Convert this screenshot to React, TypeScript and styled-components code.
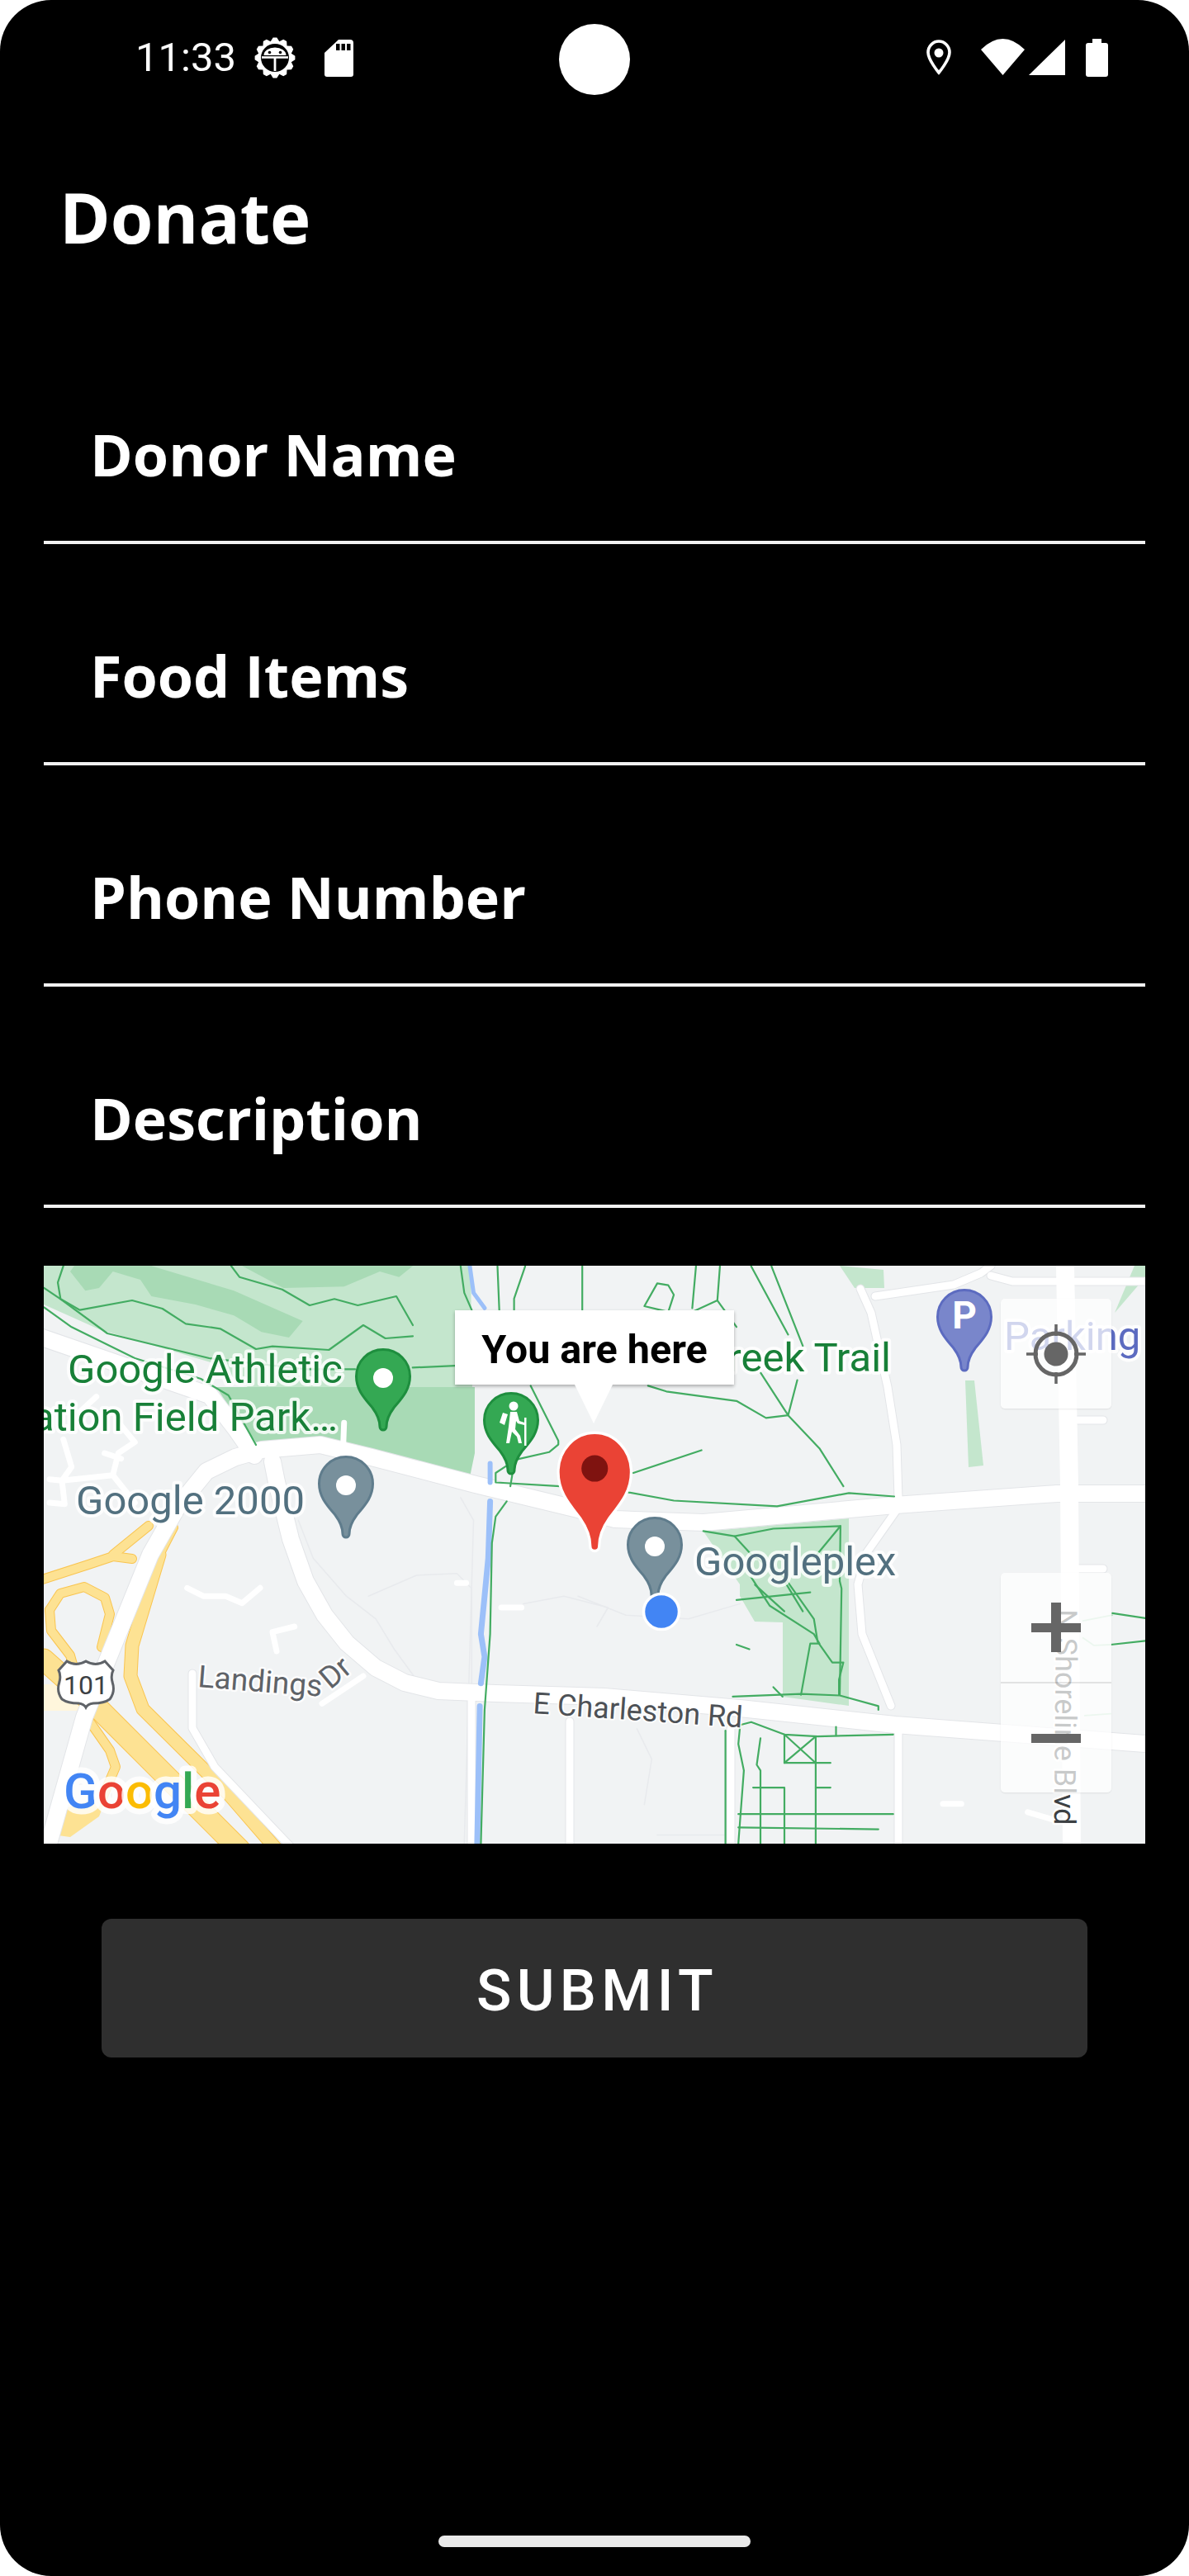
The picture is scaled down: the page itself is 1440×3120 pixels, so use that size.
import React from "react";
import styled, { createGlobalStyle } from "styled-components";

const Global = createGlobalStyle`
  html, body { margin: 0; padding: 0; background: #fff; }
  #root { width: 1440px; height: 3120px; }
`;

const Phone = styled.div`
  position: relative;
  width: 1440px;
  height: 3120px;
  background: #000;
  border-radius: 62px;
  display: flex;
  flex-direction: column;
  overflow: hidden;
  color: #fff;
`;

const StatusBar = styled.header`
  height: 140px;
  flex: none;
  display: grid;
  grid-template-columns: 1fr 86px 1fr;
  align-items: start;
  padding-top: 29px;
  box-sizing: border-box;
`;
const StatusLeft = styled.div`
  display: flex;
  align-items: center;
  height: 86px;
  padding-left: 164px;
  margin-top: -2px;
`;
const Clock = styled.span`
  font: 400 49px/56px Roboto, sans-serif;
  color: #fff;
  width: 144px;
`;
const Camera = styled.div`
  width: 86px;
  height: 86px;
  border-radius: 50%;
  background: #fff;
`;
const StatusRight = styled.div`
  display: flex;
  justify-content: flex-end;
  padding: 16px 98px 0 0;
  height: 50px;
`;
const StatusIcons = styled.svg`
  display: block;
`;

const Title = styled.h1`
  margin: 68px 0 73px 72px;
  font: 700 83.5px/110px "Open Sans", sans-serif;
  color: #fff;
`;

const Field = styled.div`
  height: 268px;
  box-sizing: border-box;
  margin: 0 53px;
  padding: 111px 0 0 56px;
  border-bottom: 4px solid #f2f2f2;
  font: 700 70px/96px "Open Sans", sans-serif;
  color: #fff;
`;

const MapFrame = styled.div`
  position: relative;
  margin: 70px 53px 0;
  height: 700px;
  overflow: hidden;
  background: #f1f3f4;
`;
const MapSvg = styled.svg`
  display: block;
  width: 1334px;
  height: 700px;
`;

const Tooltip = styled.div`
  position: absolute;
  left: 498px;
  top: 54px;
  width: 338px;
  height: 90px;
  padding-top: 5px;
  box-sizing: border-box;
  background: #fff;
  box-shadow: 0 2px 4px rgba(0, 0, 0, 0.3);
  display: flex;
  align-items: center;
  justify-content: center;
  font: 700 48.5px/54px Roboto, sans-serif;
  color: #000;
  &::after {
    content: "";
    position: absolute;
    left: 145px;
    top: 90px;
    border-left: 23px solid transparent;
    border-right: 23px solid transparent;
    border-top: 47px solid #fff;
  }
`;

const MapControl = styled.div<{ $top: number; $height: number }>`
  position: absolute;
  left: 1159px;
  top: ${(p) => p.$top}px;
  width: 134px;
  height: ${(p) => p.$height}px;
  background: rgba(255, 255, 255, 0.72);
  border-radius: 5px;
  box-shadow: 0 1px 2px rgba(0, 0, 0, 0.08);
  display: flex;
  flex-direction: column;
`;
const ControlCell = styled.div<{ $divider?: boolean }>`
  flex: 1;
  display: flex;
  align-items: center;
  justify-content: center;
  ${(p) => (p.$divider ? "border-bottom: 2px solid rgba(0,0,0,.1);" : "")}
`;
const ControlIcon = styled.svg`
  display: block;
`;

const SubmitButton = styled.button`
  display: block;
  margin: 91px 123px 0;
  height: 168px;
  flex: none;
  border: 0;
  border-radius: 12px;
  padding: 6px 0 0 7px;
  background: #2f2f2f;
  color: #fff;
  font: 500 70px/80px Roboto, sans-serif;
  letter-spacing: 6.3px;
  text-transform: uppercase;
`;

const HomeIndicator = styled.div`
  margin: auto auto 35px;
  width: 378px;
  height: 14px;
  border-radius: 7px;
  background: #e9e9e9;
`;

/* map drawing parts */
const Area = styled.polygon<{ $c: string }>`
  fill: ${(p) => p.$c};
  stroke: none;
`;
const Line = styled.polyline<{ $c: string; $w: number }>`
  fill: none;
  stroke: ${(p) => p.$c};
  stroke-width: ${(p) => p.$w}px;
  stroke-linejoin: round;
  stroke-linecap: round;
`;
const Label = styled.text<{ $c: string; $s: number; $halo?: number; $w?: number }>`
  font-family: Roboto, sans-serif;
  font-size: ${(p) => p.$s}px;
  font-weight: ${(p) => p.$w ?? 400};
  fill: ${(p) => p.$c};
  stroke: rgba(255, 255, 255, 0.82);
  stroke-width: ${(p) => p.$halo ?? 8}px;
  stroke-linejoin: round;
  paint-order: stroke;
`;

type Zone = "a" | "b" | "c" | "d";
const zones: Record<Zone, (x: number, y: number) => [number, number]> = {
  a: (x, y) => [40 + x / 2.24, 1520 + y / 2.178], // left half
  b: (x, y) => [700 + x / 2.24, 1520 + y / 2.178], // right half
  c: (x, y) => [50 + x / 3, 1530 + y / 3], // top-left detail
  d: (x, y) => [50 + x / 3, 1880 + y / 3], // bottom-left detail
};
const P = (z: Zone, s: string) =>
  s
    .trim()
    .split(/\s+/)
    .map((t) => {
      const [x, y] = t.split(",").map(Number);
      const [a, b] = zones[z](x, y);
      return `${a.toFixed(1)},${b.toFixed(1)}`;
    })
    .join(" ");

const roads: string[] = [
  "57,2240 102,2080 182,1883 215,1825 250,1782 285,1765 317,1756 388,1750 450,1765 576,1798 700,1828 745,1840 852,1844 1084,1823 1280,1809 1395,1809",
  "45,1618 254,1690 285,1730 308,1763",
  "330,1770 335,1795 352,1864 370,1915 393,1956 420,1990 455,2020 490,2038 531,2048 600,2051 732,2055 896,2069 1084,2089 1387,2112",
];

const minorRoads: string[] = [
  "1042,1561 1055,1590 1075,1680 1086,1750 1088,1814",
  "1088,1826 1050,1880 1039,1919 1044,1979 1079,2066",
  "1088,2098 1088,2240",
  "885,2094 885,2240",
  "571,2060 571,2240",
  "690,2085 690,2240",
  "233,2027 233,2093 260,2140 355,2240",
  "1060,1570 1155,1556 1188,1542 1200,1533",
  "1200,1545 1226,1552 1280,1552",
  "1302,1552 1387,1552",
  "1302,1720 1336,1720",
  "1302,1900 1336,1900",
];
const tinyRoads: [Zone, string][] = [
  ["c", "200,485 140,540"],
  ["c", "80,640 110,740 75,790 260,770 340,870"],
  ["c", "260,770 280,690 340,650 290,590"],
  ["c", "230,690 290,710"],
  ["c", "30,785 75,790 85,875 30,870"],
  ["c", "1100,580 1097,660"],
  ["d", "530,130 590,160 670,160 730,185 795,130"],
  ["d", "920,270 840,290 855,360"],
  ["d", "1020,550 1170,450"],
  ["a", "1150,865 1175,865"],
  ["a", "1270,930 1325,930"],
  ["b", "990,1448 1040,1448"],
  ["b", "1220,1470 1290,1490"],
];
const faint: [Zone, string][] = [
  ["a", "720,700 760,800 850,900 930,960 980,1040 1040,1120"],
  ["a", "910,900 1040,845 1150,840 1190,880 1190,1180"],
  ["a", "1160,640 1195,700 1170,1553"],
  ["a", "1330,920 1440,900 1560,930 1530,980"],
  ["b", "0,900 130,950 300,960 440,920"],
  ["b", "160,1250 200,1330 180,1450"],
  ["b", "215,1530 400,1530"],
];

const trails: [Zone, string][] = [
  ["c", "80,10 60,70 70,130 140,170 330,135 440,165 525,220 650,238 780,312 840,302 1045,315 1170,225 1250,273 1350,265"],
  ["c", "690,10 720,50 875,95 975,153 1065,130 1150,153 1290,120 1350,225"],
  ["c", "10,160 110,232 340,345 580,420 680,480 780,660"],
  ["c", "10,90 70,130 240,255 610,345 960,385 1140,385"],
  ["a", "1030,297 1145,292"],
  ["a", "1335,30 1305,115 1305,145"],
  ["a", "1260,30 1265,145"],
  ["a", "1490,30 1490,80 1490,145"],
  ["a", "1160,30 1170,100 1190,145"],
  ["a", "1350,345 1425,490 1425,500 1400,520 1310,540 1255,575 1255,600 1430,610"],
  ["a", "1300,580 1295,610"],
  ["a", "1285,650 1255,690 1245,760 1240,1000 1225,1200 1215,1553"],
  ["b", "320,30 310,140"],
  ["b", "385,30 378,120 310,150"],
  ["b", "215,75 180,135 245,150 260,105 245,80 215,75"],
  ["b", "378,120 430,190"],
  ["b", "190,345 240,360 430,385 510,430 570,423 595,330"],
  ["b", "470,30 570,210"],
  ["b", "525,30 610,240"],
  ["b", "495,310 570,423 655,510 720,610"],
  ["b", "150,575 335,515"],
  ["b", "130,625 260,648 540,663 735,628 858,637"],
  ["b", "340,728 425,742 530,722 712,715 710,860 715,880 710,1160"],
  ["b", "425,742 470,790 560,850 640,960 650,1020 690,1075 720,1075 708,1120 708,1160"],
  ["b", "712,715 640,800"],
  ["b", "470,850 520,925 640,1000 655,1025 630,1025 605,1160"],
  ["b", "430,910 630,890"],
  ["b", "480,870 560,940"],
  ["b", "560,860 610,940"],
  ["b", "530,1140 555,1165"],
  ["b", "420,1165 605,1158 710,1162 815,1190 815,1200"],
  ["b", "430,1028 465,1040"],
  ["b", "440,1240 470,1232 560,1265 650,1270 855,1265"],
  ["b", "400,1255 400,1553"],
  ["b", "440,1240 435,1290 450,1360 435,1553"],
  ["b", "495,1275 485,1345 495,1360 495,1553"],
  ["b", "560,1265 560,1340 645,1340 685,1340"],
  ["b", "645,1270 645,1553"],
  ["b", "560,1265 645,1340"],
  ["b", "560,1340 645,1270"],
  ["b", "475,1405 560,1405 560,1553"],
  ["b", "645,1405 685,1405"],
  ["b", "435,1475 855,1475"],
  ["b", "435,1510 815,1515"],
  ["b", "700,1245 700,1268"],
  ["b", "1450,945 1540,958"],
  ["b", "1445,1028 1540,1018"],
];

const highways: [string, number][] = [
  ["53,2010 117,2067 290,2240", 25],
  ["193,1883 160,1993 158,2030 173,2070 277,2173 335,2240", 15],
  ["60,1950 73,1930 102,1922 127,1935 133,1955 123,1995", 10],
  ["60,1950 62,1975 85,2005 92,2030", 10],
  ["45,1915 107,1895 137,1885 160,1888", 10],
  ["137,1883 180,1848", 10],
  ["110,2087 133,2120 140,2140 123,2180 83,2213 63,2213", 10],
  ["210,1850 193,1883", 10],
];

const PIN =
  "M34 1.5C16 1.5 1.5 16 1.5 34C1.5 50 11 60 21 72C27 80 30 88 30 95a4 4 0 0 0 8 0C38 88 41 80 47 72C57 60 66.5 50 66.5 34C66.5 16 52 1.5 34 1.5Z";

const Pin = ({ x, y, fill, edge, children }: { x: number; y: number; fill: string; edge: string; children?: React.ReactNode }) => (
  <g transform={`translate(${x} ${y})`}>
    <path d={PIN} fill={fill} stroke={edge} strokeWidth={3} />
    {children}
  </g>
);

const gearPath = (() => {
  const teeth = 12;
  const out: string[] = [];
  for (let i = 0; i < teeth; i++) {
    const c = (i / teeth) * Math.PI * 2 - Math.PI / 2;
    const step = (Math.PI * 2) / teeth;
    [
      [20.5, -0.5],
      [24.5, -0.18],
      [24.5, 0.18],
      [20.5, 0.5],
    ].forEach(([r, f]) => {
      const a = c + f * step;
      out.push(`${(333 + r * Math.cos(a)).toFixed(2)},${(68 + r * Math.sin(a)).toFixed(2)}`);
    });
  }
  return out.join(" ");
})();

const fields = ["Donor Name", "Food Items", "Phone Number", "Description"];

export default function App() {
  return (
    <Phone>
      <Global />
      <StatusBar>
        <StatusLeft>
          <Clock>11:33</Clock>
          <StatusIcons width="120" height="86" viewBox="308 25 120 86">
            <polygon points={gearPath} fill="#fff" />
            <circle cx="333" cy="68" r="17" fill="#000" />
            <path d="M319.5 65A13.500 9.500 0 0 1 346.500 65z" fill="#fff" />
            <circle cx="326.5" cy="61.5" r="1.800" fill="#000" />
            <circle cx="339.5" cy="61.5" r="1.800" fill="#000" />
            <rect x="317" y="66.2" width="32" height="2.600" fill="#fff" />
            <rect x="331.6" y="68" width="2.800" height="16" fill="#fff" />
            <path d="M410 46h14a4 4 0 0 1 4 4v38a3 3 0 0 1-3 3h-29a3 3 0 0 1-3-3V62z" fill="#fff" />
            <rect x="407" y="51" width="4.500" height="8" fill="#000" />
            <rect x="413.5" y="51" width="4.500" height="8" fill="#000" />
            <rect x="420" y="51" width="4.500" height="8" fill="#000" />
          </StatusIcons>
        </StatusLeft>
        <Camera />
        <StatusRight>
          <StatusIcons width="224" height="50" viewBox="1118 43 224 50">
            <path d="M1137 48c-7 0-13 6-13 13.500c0 9 13 24.500 13 24.500s13-15.500 13-24.500c0-7.500-6-13.500-13-13.500z" fill="none" stroke="#fff" strokeWidth="3.600" />
            <circle cx="1137" cy="62" r="5.500" fill="#fff" />
            <path d="M1214.500 89L1188 58Q1214.500 32 1241 58Z" fill="#fff" />
            <path d="M1246 89L1290 46V89Z" fill="#fff" />
            <path d="M1323 50v-5h11v5h5a3 3 0 0 1 3 3v35a3 3 0 0 1-3 3h-21a3 3 0 0 1-3-3V53a3 3 0 0 1 3-3z" fill="#fff" />
          </StatusIcons>
        </StatusRight>
      </StatusBar>

      <Title>Donate</Title>

      {fields.map((f) => (
        <Field key={f}>{f}</Field>
      ))}

      <MapFrame>
        <MapSvg viewBox="53 1533 1334 700" preserveAspectRatio="none">
          {/* parks */}
          <Area $c="#c4e6cd" points="53,1533 570,1533 572,1682 300,1680 255,1650 120,1610 53,1580" />
          <Area $c="#a8dab5" points="262,1680 575,1680 575,1760 569,1789 388,1745 308,1752" />
          <Area
            $c="#a8dab5"
            points={P("c", "105,30 160,100 210,90 260,30 360,60 400,120 560,150 700,190 800,250 900,270 950,210 700,100 400,10 120,10")}
          />
          <Area $c="#a8dab5" points={P("c", "730,10 880,90 1100,85 1230,30 1300,50 1350,10")} />
          <Area
            $c="#c4e6cd"
            points="852,1855 1028,1839 1028,2066 948,2055 948,1965 914,1964 896,1933 896,1919"
          />
          <Area $c="#c4e6cd" points="1169,1672 1180,1672 1191,1775 1173,1777" />
          <Area $c="#c4e6cd" points="1017,1533 1070,1538 1071,1560 1035,1560" />
          <Area $c="#c4e6cd" points="1374,1533 1387,1533 1387,1547 1350,1590" />

          {/* faint outlines */}
          {faint.map(([z, s], i) => (
            <Line key={i} $c="#e8eaed" $w={1.500} points={P(z, s)} />
          ))}

          {/* highway */}
          <Area $c="#fff6dc" points="53,2040 100,2040 100,2072 53,2072" />
          {highways.map(([s, w], i) => (
            <Line key={i} $c="#f9c44f" $w={w + 2} points={s} />
          ))}
          {highways.map(([s, w], i) => (
            <Line key={i} $c="#fde293" $w={w} points={s} />
          ))}
          <Area $c="#fde293" points="62,2195 130,2175 120,2200 85,2225 63,2222" />

          {/* roads */}
          {minorRoads.map((s, i) => (
            <Line key={i} $c="#e3e5e8" $w={11} points={s} />
          ))}
          {roads.map((s, i) => (
            <Line key={i} $c="#e3e5e8" $w={22} points={s} />
          ))}
          {minorRoads.map((s, i) => (
            <Line key={i} $c="#fff" $w={9} points={s} />
          ))}
          {tinyRoads.map(([z, s], i) => (
            <Line key={i} $c="#fff" $w={7} points={P(z, s)} />
          ))}
          <Line $c="#fff" $w={22} points="1290,1533 1295,1800 1298,2240" />
          {roads.map((s, i) => (
            <Line key={i} $c="#fff" $w={20} points={s} />
          ))}

          {/* river */}
          <Line $c="#9cc0f9" $w={5} points={P("a", "1185,30 1195,100 1225,140")} />
          <Line $c="#9cc0f9" $w={6} points={P("a", "1240,550 1240,600")} />
          <Line $c="#9cc0f9" $w={7} points={P("a", "1240,650 1235,800 1225,900 1215,1000 1225,1060 1215,1130")} />
          <Line $c="#9cc0f9" $w={7} points={P("a", "1212,1190 1205,1553")} />

          {/* trails */}
          {trails.map(([z, s], i) => (
            <Line key={i} $c="#43ac62" $w={2.200} points={P(z, s)} />
          ))}
          <Line $c="#b9e2c6" $w={1.800} points={P("b", "1450,950 1370,965")} />
          <Line $c="#b9e2c6" $w={1.800} points={P("b", "1370,1010 1400,1030 1445,1028")} />
          <Line $c="#b9e2c6" $w={1.800} points={P("b", "1375,1215 1445,1210")} />

          {/* labels */}
          <Label $c="#188038" $s={49} x={82} y={1675}>Google Athletic</Label>
          <Label $c="#188038" $s={49} x={409} y={1733} textAnchor="end">Recreation Field Park…</Label>
          <Label $c="#188038" $s={49} x={1079} y={1661} textAnchor="end">Creek Trail</Label>
          <Label $c="#52707f" $s={49} x={92} y={1834}>Google 2000</Label>
          <Label $c="#52707f" $s={49} x={841} y={1908}>Googleplex</Label>
          <Label $c="#5c6bc0" $s={49} x={1216} y={1635}>Parking</Label>
          <Label $c="#4d5156" $s={36} $halo={4} transform="translate(645 2075) rotate(3.900)">E Charleston Rd</Label>
          <Label $c="#5f6368" $s={37} $halo={5} transform="translate(239 2043) rotate(4.500)">Landings</Label>
          <Label $c="#5f6368" $s={37} $halo={5} transform="translate(400 2047) rotate(-40)">Dr</Label>
          <Label $c="#3c4043" $s={36} $halo={5} transform="translate(1279 1949) rotate(90.500)">N Shoreline Blvd</Label>

          {/* shield */}
          <g transform="translate(68 2011)">
            <path
              d="M3 12L13 1Q24 8 36 1Q48 8 59 1L69 12Q66 18 68 26Q72 38 65 47Q58 52 45 52Q38 53 36 57Q34 53 27 52Q14 52 7 47Q0 38 4 26Q6 18 3 12Z"
              fill="#fff"
              stroke="#5f6368"
              strokeWidth="3"
            />
            <Label $c="#3c4043" $s={32} $halo={0} x={36} y={41} textAnchor="middle">101</Label>
          </g>

          {/* google logo */}
          <Label $c="#4285f4" $s={60} $w={500} $halo={14} x={77} y={2190}>
            G<tspan fill="#ea4335">o</tspan>
            <tspan fill="#fbbc04">o</tspan>
            <tspan fill="#4285f4">g</tspan>
            <tspan fill="#34a853">l</tspan>
            <tspan fill="#ea4335">e</tspan>
          </Label>

          {/* markers */}
          <Pin x={430} y={1633} fill="#34a853" edge="#1e8e3e">
            <circle cx="34" cy="36" r="12" fill="#fff" />
          </Pin>
          <Pin x={585} y={1686} fill="#34a853" edge="#1e8e3e">
            <circle cx="37" cy="17" r="5.500" fill="#fff" />
            <path d="M33 24h8l3 11 6 2v3l-8-2-2-3-1 10 6 8 2 9h-4l-2-8-6-6-3 14h-4l3-20z" fill="#fff" />
            <path d="M24 25l6 2-4 13-6-3z" fill="#fff" />
            <rect x="50" y="31" width="2.500" height="34" fill="#fff" />
          </Pin>
          <Pin x={385} y={1763} fill="#78909c" edge="#5f7c8c">
            <circle cx="34" cy="36" r="12" fill="#fff" />
          </Pin>
          <Pin x={759} y={1837} fill="#78909c" edge="#5f7c8c">
            <circle cx="34" cy="36" r="12" fill="#fff" />
          </Pin>
          <Pin x={1134} y={1561} fill="#7986cb" edge="#5c6bc0">
            <text x="34" y="48" textAnchor="middle" fontFamily="Roboto, sans-serif" fontWeight="700" fontSize="46" fill="#fff">P</text>
          </Pin>
          <circle cx="801" cy="1952" r="21.500" fill="#4285f4" stroke="#fff" strokeWidth="3.500" />
          <g transform="translate(674 1733) scale(1.360 1.470)">
            <path d={PIN} fill="#ea4335" stroke="#fff" strokeWidth="2.400" />
            <ellipse cx="34" cy="31" rx="11.800" ry="10.900" fill="#7f1310" />
          </g>
        </MapSvg>

        <Tooltip>You are here</Tooltip>

        <MapControl $top={40} $height={133}>
          <ControlCell>
            <ControlIcon width="80" height="80" viewBox="0 0 80 80">
              <circle cx="40" cy="40" r="25" fill="none" stroke="#666" strokeWidth="5" />
              <circle cx="40" cy="40" r="14.500" fill="#666" />
              <path d="M40 4v14M40 62v14M4 40h14M62 40h14" stroke="#666" strokeWidth="3.500" />
            </ControlIcon>
          </ControlCell>
        </MapControl>
        <MapControl $top={372} $height={266}>
          <ControlCell $divider>
            <ControlIcon width="60" height="60" viewBox="0 0 60 60">
              <path d="M0 25h60v11H0zM24 0h12v60H24z" fill="#666" />
            </ControlIcon>
          </ControlCell>
          <ControlCell>
            <ControlIcon width="60" height="11" viewBox="0 0 60 11">
              <path d="M0 0h60v11H0z" fill="#666" />
            </ControlIcon>
          </ControlCell>
        </MapControl>
      </MapFrame>

      <SubmitButton>Submit</SubmitButton>
      <HomeIndicator />
    </Phone>
  );
}
